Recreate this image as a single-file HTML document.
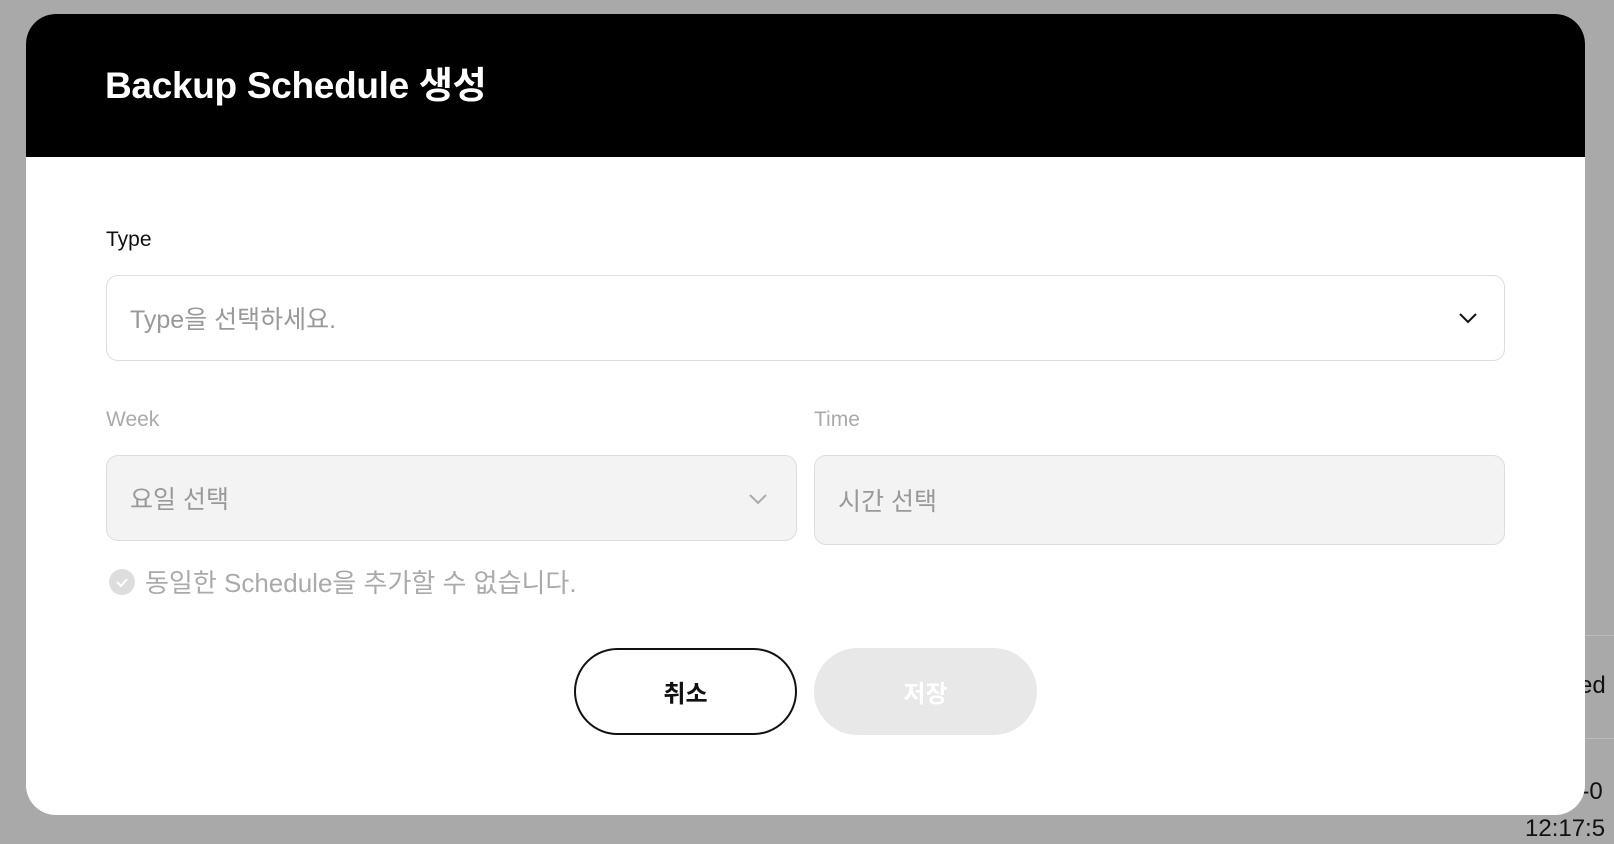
<!DOCTYPE html>
<html><head><meta charset="utf-8"><style>
*{margin:0;padding:0;box-sizing:border-box}
body{width:1614px;height:844px;background:#a9a9a9;font-family:"Liberation Sans","Noto Sans CJK KR",sans-serif;position:relative;overflow:hidden}
.bg{position:absolute;color:#111;font-size:24px}
.modal{position:absolute;left:26px;top:14px;width:1559px;height:801px;background:#fff;border-radius:30px;overflow:hidden}
.hd{height:143px;background:#000;color:#fff;font-weight:bold;font-size:37px;padding:41px 0 0 79px;letter-spacing:-0.3px}
.abs{position:absolute}
.lbl{font-size:21px;color:#111}
.box{border:1px solid #ddd;border-radius:12px;font-size:25px;color:#999;padding-left:23px;display:flex;align-items:center}
.btn{border-radius:44px;display:flex;align-items:center;justify-content:center;font-size:24px;font-weight:bold}
</style></head><body>
<div class="bg" style="left:1585px;top:635px;width:29px;height:1px;background:#bbb"></div>
<div class="bg" style="left:1585px;top:738px;width:29px;height:1px;background:#bbb"></div>
<div class="bg" style="left:1579px;top:672px">ed</div>
<div class="bg" style="left:1568px;top:778px">5-0</div>
<div class="bg" style="left:1525px;top:815px">12:17:5</div>
<div class="modal">
<div class="hd">Backup Schedule 생성</div>
<div class="abs lbl" style="left:80px;top:214px">Type</div>
<div class="abs box" style="left:80px;top:261px;width:1399px;height:86px">Type을 선택하세요.
<svg class="abs" style="right:26px;top:36px" width="20" height="12" viewBox="0 0 20 12"><path d="M2 2l8 8 8-8" fill="none" stroke="#111" stroke-width="2"/></svg></div>
<div class="abs lbl" style="left:80px;top:394px;color:#aaa">Week</div>
<div class="abs lbl" style="left:788px;top:394px;color:#aaa">Time</div>
<div class="abs box" style="left:80px;top:441px;width:691px;height:86px;background:#f3f3f3">요일 선택
<svg class="abs" style="right:28px;top:37px" width="20" height="12" viewBox="0 0 20 12"><path d="M2 2l8 8 8-8" fill="none" stroke="#aaa" stroke-width="2"/></svg></div>
<div class="abs box" style="left:788px;top:441px;width:691px;height:90px;background:#f3f3f3">시간 선택</div>
<svg class="abs" style="left:82px;top:554px" width="28" height="28" viewBox="0 0 28 28"><circle cx="14" cy="14" r="13" fill="#ddd"/><path d="M9 14l4 4 6-7" fill="none" stroke="#fff" stroke-width="2"/></svg>
<div class="abs" style="left:119px;top:549px;font-size:26px;color:#aaa">동일한 Schedule을 추가할 수 없습니다.</div>
<div class="abs btn" style="left:548px;top:634px;width:223px;height:87px;border:2px solid #111;color:#111">취소</div>
<div class="abs btn" style="left:788px;top:634px;width:223px;height:87px;background:#e8e8e8;color:#fff">저장</div>
</div>
</body></html>
